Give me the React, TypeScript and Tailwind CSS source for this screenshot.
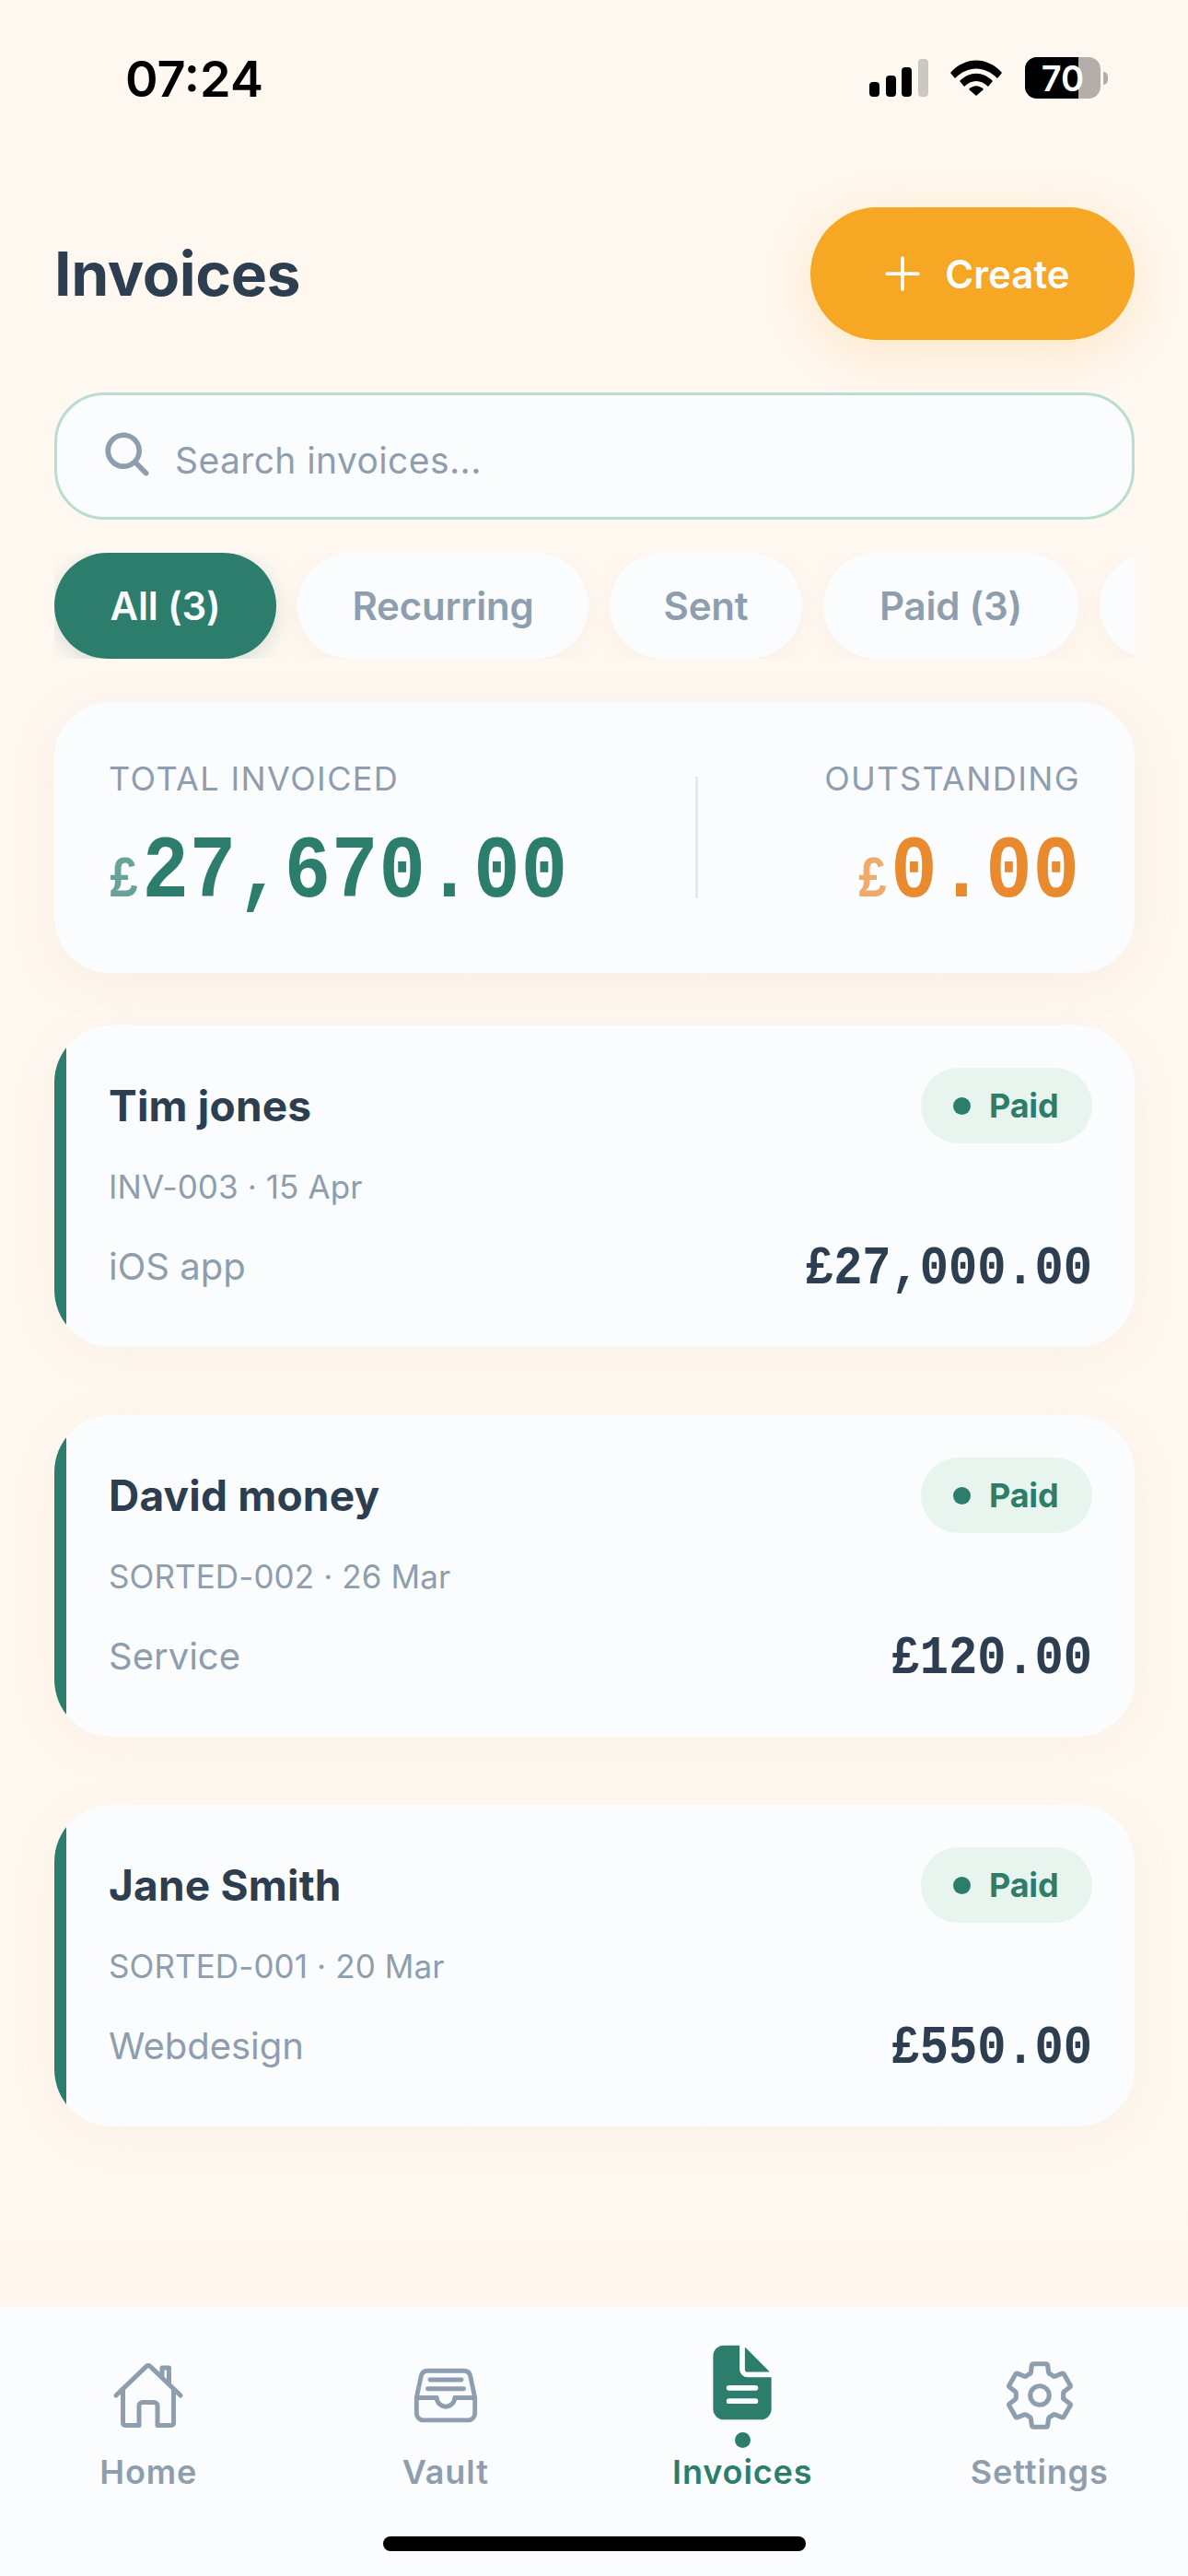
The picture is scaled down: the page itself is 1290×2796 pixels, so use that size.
import React from 'react'
import { IoHomeOutline, IoFileTrayFullOutline, IoDocumentText, IoSettingsOutline, IoSearch, IoAddOutline } from 'react-icons/io5'

const sans = { fontFamily: 'Inter, "Noto Sans", sans-serif' }
const mono = { fontFamily: '"Liberation Mono", monospace' }

interface Invoice {
  client: string
  meta: string
  desc: string
  amount: string
}

const INVOICES: Invoice[] = [
  { client: 'Tim jones', meta: 'INV-003 · 15 Apr', desc: 'iOS app', amount: '£27,000.00' },
  { client: 'David money', meta: 'SORTED-002 · 26 Mar', desc: 'Service', amount: '£120.00' },
  { client: 'Jane Smith', meta: 'SORTED-001 · 20 Mar', desc: 'Webdesign', amount: '£550.00' },
]

const StatusBar: React.FC = () => (
  <div className="flex h-[225px] items-start justify-between pt-[52px] pl-[136px] pr-[87px]">
    <span className="text-[54px] leading-[68px] font-semibold text-black">07:24</span>
    <div className="flex items-center pt-[10px]">
      <svg width="64" height="41" viewBox="0 0 64 41">
        <rect x="0" y="25" width="11" height="16" rx="4" fill="#000" />
        <rect x="18" y="18" width="11" height="23" rx="4" fill="#000" />
        <rect x="35" y="9" width="11" height="32" rx="4" fill="#000" />
        <rect x="53" y="0" width="11" height="41" rx="4" fill="#cbc8c3" />
      </svg>
      <svg className="ml-[24px]" width="56" height="39" viewBox="0 0 56 39">
        <path d="M0 14 C16 -4 40 -4 56 14 L51 20 C37 6 19 6 5 20 Z" fill="#000" />
        <path d="M10 23 C21 12 35 12 46 23 L41 29 C33 21 23 21 15 29 Z" fill="#000" />
        <path d="M20 32 C25 27 31 27 36 32 L28 39 Z" fill="#000" />
      </svg>
      <div className="relative ml-[25px] h-[45px] w-[82px] overflow-hidden rounded-[13px] bg-[#b3aea9]">
        <div className="h-full w-[58px] bg-black" />
        <span className="absolute inset-0 flex items-center justify-center text-[38px] leading-none font-semibold text-white">70</span>
      </div>
      <div className="ml-[3px] h-[14px] w-[5px] rounded-r-full bg-[#b3aea9]" />
    </div>
  </div>
)

const Chip: React.FC<{ label: string; active?: boolean; width: string }> = ({ label, active, width }) => (
  <div
    className={`flex h-[115px] shrink-0 items-center justify-center rounded-full text-[42px] font-semibold tracking-[-0.2px] ${width} ${
      active ? 'bg-[#2d7d6d] text-[#fafcfe] shadow-[0_6px_24px_rgba(45,125,109,0.2)]' : 'bg-[#fafcfe] text-[#8e9eae] shadow-[0_6px_24px_rgba(190,150,110,0.08)]'
    }`}
  >
    {label}
  </div>
)

const InvoiceCard: React.FC<{ invoice: Invoice }> = ({ invoice }) => (
  <div className="flex h-[349px] overflow-hidden rounded-[62px] bg-[#fafcfe] shadow-[0_10px_50px_rgba(190,150,110,0.07)]">
    <div className="w-[13px] shrink-0 bg-[#2d7d6d]" />
    <div className="flex-1 pt-[46px] pl-[46px] pr-[46px]">
      <div className="flex h-[82px] items-center justify-between">
        <span className="text-[46px] font-bold tracking-[0.2px] text-[#2c3e50]">{invoice.client}</span>
        <div className="flex h-[82px] w-[186px] items-center gap-[20px] rounded-full bg-[#e8f5ee] pl-[35px]">
          <div className="h-[19px] w-[19px] rounded-full bg-[#2d7d6d]" />
          <span className="text-[36px] font-bold tracking-[-0.2px] text-[#2d7d6d]">Paid</span>
        </div>
      </div>
      <div className="mt-[25px] text-[35px] leading-[44px] tracking-[0.1px] text-[#8e9eae]">{invoice.meta}</div>
      <div className="mt-[35px] flex h-[60px] items-center justify-between">
        <span className="text-[40px] text-[#8e9eae]">{invoice.desc}</span>
        <span className="inline-block origin-center translate-y-[3px] scale-y-[1.15] text-[52px] font-bold text-[#2c3e50]" style={mono}>
          {invoice.amount}
        </span>
      </div>
    </div>
  </div>
)

const Money: React.FC<{ value: string; color: string }> = ({ value, color }) => (
  <div className={`flex h-[100px] items-baseline font-bold ${color}`} style={mono}>
    <span className="mr-[6px] inline-block origin-bottom scale-y-[1.15] text-[54px] tracking-[-2px] opacity-70">£</span>
    <span className="inline-block origin-bottom scale-y-[1.15] text-[84px] leading-[100px] tracking-[1px]">{value}</span>
  </div>
)

const NavItem: React.FC<{ label: string; icon: React.ReactNode; active?: boolean }> = ({ label, icon, active }) => (
  <div className="flex flex-1 flex-col items-center justify-end">
    {icon}
    {active ? <div className="mt-[6px] mb-[4px] h-[17px] w-[17px] rounded-full bg-[#2d7d6d]" /> : <div className="h-[19px]" />}
    <span className={`text-[36px] leading-[44px] font-semibold tracking-[0.9px] ${active ? 'text-[#2d7d6d]' : 'text-[#8e9eae]'}`}>{label}</span>
  </div>
)

export default function App() {
  return (
    <div
      className="flex h-[2796px] w-[1290px] flex-col overflow-hidden bg-gradient-to-b from-[#fff8f1] via-[#fff8f0] via-85% to-[#fcf3eb]"
      style={sans}
    >
      <StatusBar />

      <div className="flex flex-1 flex-col pl-[59px] pr-[58px]">
        {/* Header */}
        <div className="flex h-[144px] items-center justify-between">
          <h1 className="text-[66px] font-bold tracking-[-0.4px] text-[#2c3e50]">Invoices</h1>
          <div className="flex h-[144px] w-[352px] items-center justify-center gap-[16px] rounded-full bg-[#f6a723] shadow-[0_12px_60px_rgba(246,167,35,0.22)]">
            <IoAddOutline size={60} color="#fafcfe" />
            <span className="text-[42px] font-semibold text-[#fafcfe]">Create</span>
          </div>
        </div>

        {/* Search */}
        <div className="mt-[57px] flex h-[138px] items-center rounded-[54px] border-[3px] border-[#b9ddd0] bg-[#fafcfe] pl-[47px]">
          <IoSearch size={58} color="#8e9eae" className="mb-[4px]" />
          <input
            className="ml-[23px] flex-1 bg-transparent pt-[10px] text-[39px] tracking-[0.4px] outline-none placeholder:text-[#8e9eae]"
            placeholder="Search invoices..."
            readOnly
          />
        </div>

        {/* Filter chips */}
        <div className="mt-[36px] flex gap-[23px] overflow-hidden">
          <Chip label="All (3)" active width="w-[241px]" />
          <Chip label="Recurring" width="w-[316px]" />
          <Chip label="Sent" width="w-[209px]" />
          <Chip label="Paid (3)" width="w-[277px]" />
          <Chip label="" width="w-[200px]" />
        </div>

        {/* Totals */}
        <div className="mt-[47px] flex h-[294px] items-start justify-between rounded-[60px] bg-[#fafcfe] px-[59px] pt-[61px] shadow-[0_10px_50px_rgba(190,150,110,0.1)]">
          <div>
            <div className="text-[36px] leading-[44px] tracking-[1.4px] text-[#8e9eae]">TOTAL INVOICED</div>
            <div className="mt-[38px]">
              <Money value="27,670.00" color="text-[#2d7d6d]" />
            </div>
          </div>
          <div className="mt-[20px] h-[132px] w-[3px] bg-[#e6e9ec]" />
          <div className="flex flex-col items-end">
            <div className="text-[36px] leading-[44px] tracking-[1.4px] text-[#8e9eae]">OUTSTANDING</div>
            <div className="mt-[38px]">
              <Money value="0.00" color="text-[#e98a2f]" />
            </div>
          </div>
        </div>

        {/* Invoice list */}
        <div className="mt-[57px] flex flex-col gap-[74px]">
          {INVOICES.map(inv => (
            <InvoiceCard key={inv.meta} invoice={inv} />
          ))}
        </div>
      </div>

      {/* Bottom tabs */}
      <div className="flex h-[292px] flex-col bg-[#fafcfe] pt-[34px]">
        <div className="flex h-[167px] items-end">
          <NavItem label="Home" icon={<IoHomeOutline size={80} color="#8e9eae" className="my-[2px]" />} />
          <NavItem label="Vault" icon={<IoFileTrayFullOutline size={78} color="#8e9eae" className="my-[3px]" />} />
          <NavItem label="Invoices" active icon={<IoDocumentText size={92} color="#2d7d6d" className="mb-[2px]" />} />
          <NavItem label="Settings" icon={<IoSettingsOutline size={82} color="#8e9eae" className="my-[1px]" />} />
        </div>
        <div className="mx-auto mt-[48px] h-[16px] w-[459px] rounded-full bg-black" />
      </div>
    </div>
  )
}
